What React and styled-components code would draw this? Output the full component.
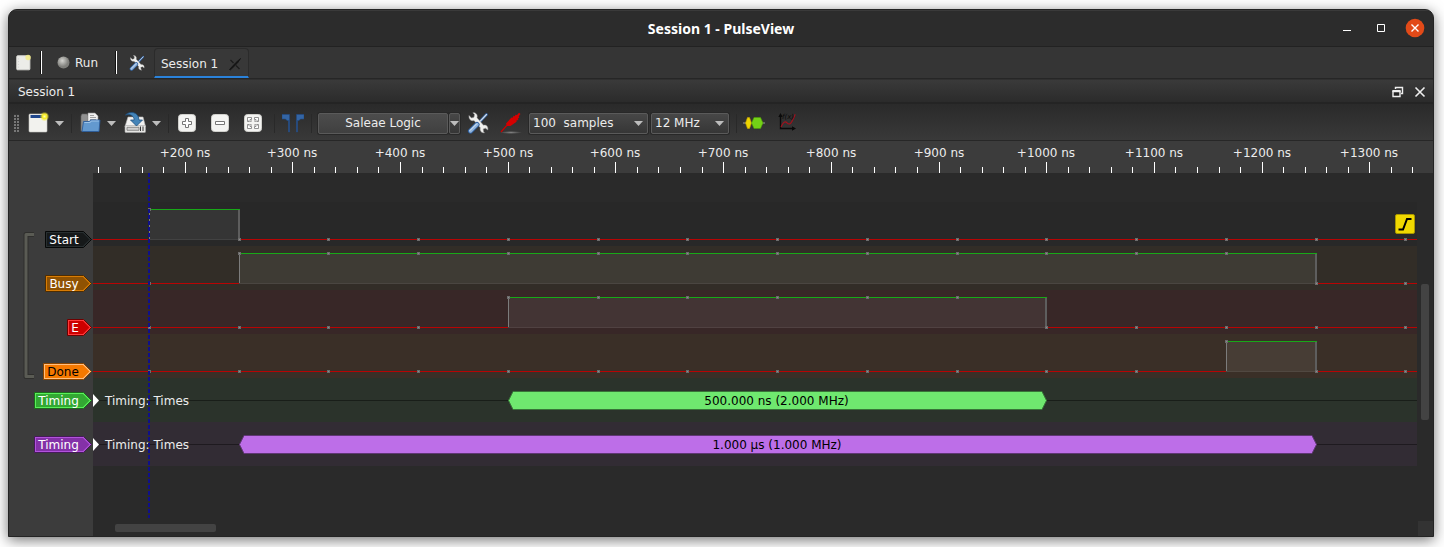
import React from "react";
import styled, { createGlobalStyle } from "styled-components";

const GlobalStyle = createGlobalStyle`
  *, *::before, *::after { box-sizing: border-box; }
  body {
    margin: 0;
    background: #fff;
    color: #ececec;
    font: 12px/16px "DejaVu Sans", Verdana, sans-serif;
  }
  button, select { font: inherit; color: inherit; }
  svg { display: block; }
`;

/* ---------- time scale ---------- */

const GUTTER = 84;
const PX_PER_NS = 1.077;
const position = (ns) => 92 + (ns - 200) * PX_PER_NS;
const tickAt = (ns) => Math.floor(position(ns) + 0.1);
const xAt = (ns) => Math.floor(position(ns) + 0.36);
const SAMPLES = Array.from({ length: 15 }, (_, i) => ((i + 2) * 250) / 3);
const ROW = 44;

/* ---------- window frame ---------- */

const Window = styled.main`
  margin: 9px 10px 10px 8px;
  border: 1px solid #242424;
  border-radius: 9px 9px 0 0;
  overflow: hidden;
  background: #2a2a2a;
  box-shadow: 0 3px 14px rgba(0, 0, 0, 0.55);
`;

const TitleBar = styled.header`
  display: grid;
  grid-template-columns: 1fr auto 1fr;
  align-items: center;
  height: 37px;
  padding: 0 8px 1px;
  background: #2c2c2c;
  border-top: 1px solid #3a3a3a;
  border-bottom: 1px solid #222;
`;

const Title = styled.h1`
  grid-column: 2;
  margin: 0;
  padding-top: 2px;
  font: bold 14px/20px "Noto Sans", "Open Sans", sans-serif;
  color: #fff;
`;

const WindowButtons = styled.div`
  display: flex;
  justify-content: flex-end;
  gap: 14px;
`;

const PlainButton = styled.button`
  display: flex;
  align-items: center;
  justify-content: center;
  flex: none;
  width: ${(p) => p.$w || 22}px;
  height: 22px;
  padding: 0;
  border: 0;
  background: none;
`;

/* ---------- main toolbar and session tab ---------- */

const MainBar = styled.nav`
  display: flex;
  align-items: center;
  height: 32px;
  padding-left: 4px;
  background: #353535;
  border-bottom: 1px solid #262626;
`;

const Divider = styled.span`
  width: 2px;
  height: 23px;
  margin: 0 9px 0 5px;
  border-left: 1px solid #111;
  background: #fff;
`;

const RunButton = styled(PlainButton)`
  width: 59px;
  justify-content: flex-start;
  gap: 5px;
  padding-left: 6px;
`;

const Tab = styled.div`
  display: flex;
  align-items: center;
  justify-content: space-between;
  align-self: flex-end;
  width: 95px;
  height: 30px;
  margin-left: 6px;
  padding: 2px 2px 0 6px;
  border: 1px solid #2b2b2b;
  border-bottom: 2px solid #2a82da;
  border-radius: 4px 4px 0 0;
  background: #383838;
`;

const DockTitle = styled.div`
  display: flex;
  align-items: center;
  height: 25px;
  padding: 2px 2px 0 9px;
  background: linear-gradient(#3a3a3a, #2b2b2b);
  border-top: 1px solid #303030;
  border-bottom: 2px solid #242424;
  h2 { margin: 0 auto 0 0; font: inherit; }
`;

/* ---------- session toolbar ---------- */

const ToolBar = styled.div`
  display: flex;
  align-items: center;
  height: 37px;
  padding: 2px 0 0 5px;
  background: linear-gradient(#2a2a2a, #393939);
  border-bottom: 1px solid #272727;
`;

const Grip = styled.span`
  width: 5px;
  height: 18px;
  margin-right: 8px;
  background:
    repeating-linear-gradient(#343434 0 1px, transparent 1px 3px),
    repeating-linear-gradient(90deg, #777 0 2px, transparent 2px 3px);
`;

const Group = styled.div`
  display: flex;
  align-items: center;
  gap: ${(p) => p.$gap}px;
  padding-right: ${(p) => p.$end || 0}px;
`;

const Separator = styled.span`
  width: 1px;
  height: 19px;
  margin: 0 ${(p) => p.$after || 7}px 0 7px;
  background: #292929;
`;

const face = `
  height: 21px;
  border: 1px solid #5a5a5a;
  border-radius: 2px;
  background: linear-gradient(#474747, #363636);
  box-shadow: 0 0 0 1px #282828;
`;

const DeviceButton = styled.button`
  ${face}
  width: 130px;
  padding: 0;
  background: linear-gradient(#4c4c4c, #404040);
`;

const ArrowButton = styled.button`
  ${face}
  display: flex;
  align-items: center;
  justify-content: center;
  width: 11px;
  padding: 0;
`;

const SelectBox = styled.label`
  display: grid;
  align-items: center;
  width: ${(p) => p.$w}px;
  select, svg { grid-area: 1 / 1; }
  svg { justify-self: end; margin-right: 5px; pointer-events: none; }
`;

const Select = styled.select`
  ${face}
  width: 100%;
  padding: 0 3px;
  appearance: none;
`;

/* ---------- trace view ---------- */

const Ruler = styled.svg`
  width: 100%;
  height: 32px;
  background: #3c3c3c;
`;

const View = styled.section`
  display: flex;
`;

const Gutter = styled.div`
  display: flex;
  flex: none;
  justify-content: space-between;
  width: ${GUTTER}px;
  padding: 29px 1px 0 14px;
  background: #3c3c3c;
`;

const TagSlot = styled.div`
  display: flex;
  align-items: center;
  justify-content: flex-end;
  height: ${ROW}px;
  padding-top: ${(p) => (p.$low ? 31 : 1)}px;
  svg { flex: none; overflow: visible; }
`;

const Plot = styled.div`
  position: relative;
  flex: 1;
  min-width: 0;
  padding-top: 29px;
`;

const Lane = styled.svg`
  width: 100%;
  height: ${ROW}px;
  background: ${(p) => p.$bg};
`;

const Cursor = styled.svg`
  position: absolute;
  top: 0;
  left: ${xAt(500 / 3) - 1}px;
  width: 2px;
  height: 345px;
`;

const Trigger = styled.button`
  position: absolute;
  top: 41px;
  right: 2px;
  width: 20px;
  height: 20px;
  padding: 0;
  border: 1px solid #a89600;
  border-radius: 2px;
  background: #f0d800;
`;

const HScroll = styled.div`
  height: 15px;
  margin-top: 55px;
  padding: 3px 22px;
`;

const VScroll = styled.div`
  display: flex;
  flex-direction: column;
  justify-content: space-between;
  align-items: center;
  flex: none;
  width: 16px;
  padding-top: 111px;
`;

const Thumb = styled.div`
  width: ${(p) => p.$w}px;
  height: ${(p) => p.$h}px;
  border-radius: 2px;
  background: #434343;
`;

const Corner = styled.div`
  width: 15px;
  height: 15px;
  background: #333;
`;

/* ---------- icons ---------- */

const Icon = ({ size = 22, children }) => (
  <svg width={size} height={size} viewBox="0 0 22 22" aria-hidden="true">{children}</svg>
);

const Caret = () => (
  <svg width="9" height="5" viewBox="0 0 9 5" aria-hidden="true">
    <path d="M0 0h9L4.500 5z" fill="#bdbdbd" />
  </svg>
);

const NewIcon = () => (
  <Icon>
    <defs>
      <radialGradient id="glow">
        <stop offset="0" stopColor="#ffffb0" />
        <stop offset=".45" stopColor="#f7ec20" />
        <stop offset="1" stopColor="#f7ec20" stopOpacity="0" />
      </radialGradient>
    </defs>
    <rect x="2" y="2" width="18" height="18" rx="1" fill="#f2f2ee" stroke="#c8c8c4" strokeWidth=".6" />
    <rect x="3.500" y="3" width="13" height="3" fill="#20478c" />
    <circle cx="17.500" cy="4.500" r="4.800" fill="url(#glow)" />
  </Icon>
);

const NewSmallIcon = () => (
  <Icon size={20}>
    <rect x="3" y="3" width="14.500" height="15.500" rx="1" fill="#ecece8" stroke="#d8d8d4" />
    <path d="M5 6v11" stroke="#ccc" strokeDasharray="1 2" />
    <circle cx="15.500" cy="5" r="3" fill="#f5ec80" opacity=".8" />
  </Icon>
);

const OpenIcon = () => (
  <Icon>
    <path d="M2 4l1-2h5l1 2v15H2z" fill="#8f8f8f" stroke="#666" strokeWidth=".6" />
    <path d="M9 1h7l3 3v8H9z" fill="#f0f0f0" stroke="#999" strokeWidth=".6" />
    <path d="M11 3.500h4M11 5.500h6M11 7.500h6" stroke="#999" strokeWidth=".9" />
    <path d="M4.500 9.500h6l1-1.500h9.500L20 19.500H3z" fill="#6399cf" stroke="#2c5d9c" strokeWidth=".9" />
    <path d="M5.400 10.500h5.800l1-1.500h7.700" fill="none" stroke="#a3c7ea" strokeWidth=".9" />
  </Icon>
);

const SaveIcon = () => (
  <Icon>
    <path d="M4 5h15l2.500 9.500H1z" fill="#f1f1f0" stroke="#bbb" strokeWidth=".6" />
    <rect x="1" y="13.500" width="20.500" height="7" rx=".8" fill="#e6e6e4" stroke="#aaa" strokeWidth=".6" />
    <path d="M3 15.300h12v3H3z" fill="#cfcfcf" stroke="#777" strokeWidth=".8" />
    <path d="M16.500 14.500v4.500M19 14.500v4.500" stroke="#222" strokeWidth=".9" />
    <path d="M1.500 3C5-1 14.500-1 15 8H18.500L12.500 14 6.500 8h3.700C10 4.500 7 1.500 1.500 3z" fill="#4484b8" stroke="#1e5180" strokeWidth=".8" />
  </Icon>
);

const ZoomBase = ({ children }) => (
  <Icon>
    <rect x="2.500" y="2.500" width="17" height="17" rx="3" fill="#f4f4f2" stroke="#d0d0cc" />
    {children}
  </Icon>
);

const ZoomInIcon = () => (
  <ZoomBase>
    <path d="M9.500 6.500h3v3h3v3h-3v3h-3v-3h-3v-3h3z" fill="#fff" stroke="#777" />
  </ZoomBase>
);

const ZoomOutIcon = () => (
  <ZoomBase>
    <path d="M6.500 9.500h9v3h-9z" fill="#fff" stroke="#777" />
  </ZoomBase>
);

const ZoomFitIcon = () => (
  <ZoomBase>
    <path
      d="M5.500 9.500v-4h4v2h-1.500l1.500 1.500-1 1-1.500-1.500v1zM16.500 9.500v-4h-4v2h1.500l-1.500 1.500 1 1 1.500-1.500v1zM5.500 12.500v4h4v-2h-1.500l1.500-1.500-1-1-1.500 1.500v-1zM16.500 12.500v4h-4v-2h1.500l-1.500-1.500 1-1 1.500 1.500v-1z"
      fill="#fff" stroke="#777" strokeWidth=".8"
    />
  </ZoomBase>
);

const FlagsIcon = () => (
  <Icon>
    <path d="M0 2.500h7.500V20h-1V8.500H5L3.500 7H0zM22 2.500h-7.500V20h1V8.500H17L18.500 7H22z" fill="#3465a4" stroke="#204a87" strokeWidth=".6" />
  </Icon>
);

const ToolsIcon = ({ size }) => (
  <Icon size={size}>
    <path d="M19.500 2.500l-9 9.500" stroke="#3465a4" strokeWidth="2.600" strokeLinecap="round" />
    <path d="M19.500 2.500l-9 9.500" stroke="#d5deea" strokeWidth="1.100" strokeLinecap="round" />
    <path d="M2 3.500L4.500 6 7 5.200 7.500 2.500 5.800.8C9 .2 11 3 10 5.800l6.500 7.400c3-.8 5 1.800 4.300 4.800l-2.300-1.800-2.300.8.300 2.600 1 1.200c-3.200.2-5-2-4.200-5L7 8.600C4 9.500 1.500 7 2 3.500z" fill="#f0f0ee" stroke="#999" strokeWidth=".5" />
    <path d="M10 12.500L3.500 19" stroke="#2c5d9c" strokeWidth="5.200" strokeLinecap="round" />
    <path d="M10 12.500L3.500 19" stroke="#8fb3dc" strokeWidth="3.400" strokeLinecap="round" />
    <path d="M9.500 12L3 18.500" stroke="#dce8f5" strokeWidth="1" strokeLinecap="round" />
  </Icon>
);

const ProbeIcon = () => (
  <Icon>
    <defs>
      <radialGradient id="probeShadow">
        <stop offset="0" stopColor="#808080" />
        <stop offset="1" stopColor="#808080" stopOpacity="0" />
      </radialGradient>
    </defs>
    <ellipse cx="11" cy="20.500" rx="11" ry="1.500" fill="url(#probeShadow)" />
    <path d="M1 20L8 12" stroke="#c00" strokeWidth="1.200" />
    <path d="M7 14L6 11.500 11.500 5.500l1.200.3.8-2 1.400.4.6-1.400 1.500.2L19 .8l1.500 1.200-1.800 2.300.6 1.300-1.300.8.2 1.500-1.800.6.2 1.300L10.500 14z" fill="#d40000" />
  </Icon>
);

const DecoderIcon = () => (
  <Icon>
    <path d="M0 11h22" stroke="#999" />
    <path d="M4.500 5.500h2l2 5.500-2 5.500h-2L2.500 11z" fill="#edd400" stroke="#c4a000" strokeWidth=".6" />
    <path d="M11 5.500h6.500l2.500 5.500-2.500 5.500H11L8.500 11z" fill="#73d216" stroke="#4e9a06" strokeWidth=".6" />
  </Icon>
);

const MathIcon = () => (
  <Icon>
    <path d="M3.500 4v12.500H17" fill="none" stroke="#0a0a0a" strokeWidth="1.400" />
    <path d="M1.300 5L3.500 1 5.700 5zM15 14.200l4 2.300-4 2.300z" fill="#0a0a0a" />
    <path d="M4 15c2-4.500 4-6.500 6-4.200s4 1 5-1.500 3-4.500 3-7" fill="none" stroke="#a4101c" strokeWidth="1.200" />
    <text x="5" y="7" fontSize="7" fontStyle="italic" fill="#0a0a0a">f(x)</text>
  </Icon>
);

/* ---------- channel tags ---------- */

function Tag({ label, w, fill, edge, rim, ink = "#fff" }) {
  return (
    <svg width={w} height="17" role="img" aria-label={label}>
      <path d={`M.5 .5H${w - 8.5}L${w - 0.5} 8.500L${w - 8.5} 16.500H.5z`} fill={edge} stroke={rim} />
      <path d={`M2 2H${w - 9}L${w - 2.5} 8.500L${w - 9} 15H2z`} fill={fill} />
      <text x={(w - 9) / 2} y="13" textAnchor="middle" fill={ink}>{label}</text>
    </svg>
  );
}

/* ---------- lanes ---------- */

function LogicLane({ bg, area, high }) {
  const [a, b] = high;
  const xa = xAt(a);
  const xb = xAt(b);
  return (
    <Lane $bg={bg} shapeRendering="crispEdges">
      <rect x="0" y="37" width={xa} height="1" fill="#b80404" />
      <rect x={xb} y="37" width="100%" height="1" fill="#b80404" />
      <rect x={xa} y="8" width={xb - xa} height="29" fill={area} />
      <rect x={xa} y="37" width={xb - xa} height="1" fill="#fff" fillOpacity=".12" />
      <rect x={xa} y="7" width="1" height="30" fill="#7c7c7c" />
      <rect x={xb - 1} y="7" width="2" height="30" fill="#5e5e5e" />
      <rect x={xa} y="7" width={xb - xa + 1} height="1" fill="#18a818" />
      {SAMPLES.map((t) => {
        const up = t > a - 1 && t < b - 1;
        return (
          <g key={t}>
            <rect x={xAt(t) - 1} y={up ? 6 : 36} width="3" height="3" fill="#6c6c6c" />
            <rect x={xAt(t)} y={up ? 7 : 37} width="1" height="1" fill="#8e8e8e" />
          </g>
        );
      })}
    </Lane>
  );
}

function DecodeLane({ bg, range, text, fill, edge }) {
  const xa = xAt(range[0]);
  const xb = xAt(range[1]);
  return (
    <Lane $bg={bg}>
      <rect x="0" y="22" width={xa} height="1" fill="#000" fillOpacity=".4" />
      <rect x={xb} y="22" width="100%" height="1" fill="#000" fillOpacity=".4" />
      <path d="M0 16v13L6 22.500z" fill="#fff" />
      <text x="12" y="27" fill="#ececec" stroke={bg} strokeWidth="2" paintOrder="stroke">Timing: Times</text>
      <path
        d={`M${xa + 0.5} 22.500L${xa + 5} 13.500H${xb - 4}L${xb + 0.5} 22.500L${xb - 4} 31.500H${xa + 5}z`}
        fill={fill} stroke={edge}
      />
      <text x={(xa + xb - 1) / 2} y="27" textAnchor="middle" fill="#000">{text}</text>
    </Lane>
  );
}

const CHANNELS = [
  { label: "Start", w: 47, fill: "#16191a", edge: "#272e30", rim: "#060808", bg: "#282828", area: "#353535", high: [500 / 3, 250] },
  { label: "Busy", w: 47, fill: "#8f5202", edge: "#d97c04", rim: "#4e2d02", bg: "#322d27", area: "#3e3b34", high: [250, 1250] },
  { label: "E", w: 25, fill: "#cc0000", edge: "#ff3b3b", rim: "#6e0000", bg: "#382727", area: "#433434", high: [500, 1000] },
  { label: "Done", w: 49, fill: "#f57900", edge: "#ffbe80", rim: "#8a4500", ink: "#000", bg: "#3a2f27", area: "#473d35", high: [3500 / 3, 1250] },
];

const DECODERS = [
  { id: "e", label: "Timing", w: 58, fill: "#33a833", edge: "#58f058", rim: "#1c6a1c", bg: "#2b332b", range: [500, 1000], text: "500.000 ns (2.000 MHz)", bar: "#6fe86f", barEdge: "#387438" },
  { id: "busy", label: "Timing", w: 58, fill: "#8431a8", edge: "#b252dc", rim: "#461a5a", bg: "#322c34", range: [250, 1250], text: "1.000 µs (1.000 MHz)", bar: "#bd6ee8", barEdge: "#5f3774" },
];

const TICKS = Array.from({ length: 62 }, (_, i) => 120 + i * 20);

export default function App() {
  return (
    <>
      <GlobalStyle />
      <Window>
        <TitleBar>
          <Title>Session 1 - PulseView</Title>
          <WindowButtons>
            <PlainButton $w={20} aria-label="Minimize">
              <svg width="20" height="20"><path d="M6 12.500h8" stroke="#fff" /></svg>
            </PlainButton>
            <PlainButton $w={20} aria-label="Maximize">
              <svg width="20" height="20"><path d="M6.500 6.500h7v7h-7z" fill="none" stroke="#fff" /></svg>
            </PlainButton>
            <PlainButton $w={20} aria-label="Close">
              <svg width="20" height="20">
                <circle cx="10" cy="10" r="9.300" fill="#e24a18" />
                <path d="M6.500 6.500l7 7M13.500 6.500l-7 7" stroke="#fff" strokeWidth="1.400" />
              </svg>
            </PlainButton>
          </WindowButtons>
        </TitleBar>

        <MainBar>
          <PlainButton aria-label="New session"><NewSmallIcon /></PlainButton>
          <Divider />
          <RunButton>
            <svg width="13" height="13" aria-hidden="true">
              <defs>
                <radialGradient id="ball" cx=".4" cy=".35">
                  <stop offset="0" stopColor="#d4d4d0" />
                  <stop offset="1" stopColor="#80807c" />
                </radialGradient>
              </defs>
              <circle cx="6.500" cy="6.500" r="6" fill="url(#ball)" />
            </svg>
            Run
          </RunButton>
          <Divider />
          <PlainButton aria-label="Settings"><ToolsIcon size={16} /></PlainButton>
          <Tab>
            Session 1
            <PlainButton aria-label="Close tab">
              <svg width="14" height="14">
                <path d="M2.500 3l3 3M8 8.500l3.500 3.500" stroke="#1c1c1c" strokeWidth="1.400" />
                <path d="M12.500 1.500L8 5.500 1.500 12.500l1 .3 7-6.800z" fill="#141414" stroke="#141414" strokeWidth=".9" />
              </svg>
            </PlainButton>
          </Tab>
        </MainBar>

        <DockTitle>
          <h2>Session 1</h2>
          <PlainButton aria-label="Float">
            <svg width="12" height="12">
              <path d="M3.500 3V1.500h7v6H9" fill="none" stroke="#eee" strokeWidth="1.400" />
              <path d="M1 5.500h7v5H1z" fill="#222" stroke="#eee" strokeWidth="1.400" />
              <path d="M.4 5h8.200" stroke="#eee" strokeWidth="2" />
            </svg>
          </PlainButton>
          <PlainButton aria-label="Close session">
            <svg width="12" height="12">
              <path d="M1.500 1.500l9 9M10.500 1.500l-9 9" stroke="#eee" strokeWidth="1.600" />
            </svg>
          </PlainButton>
        </DockTitle>

        <ToolBar>
          <Grip />
          <Group $gap={5}>
            <PlainButton aria-label="New view"><NewIcon /></PlainButton>
            <PlainButton $w={10} aria-label="New view menu"><Caret /></PlainButton>
          </Group>
          <Separator />
          <Group $gap={5} $end={8}>
            <PlainButton aria-label="Open"><OpenIcon /></PlainButton>
            <PlainButton $w={10} aria-label="Open menu"><Caret /></PlainButton>
          </Group>
          <Group $gap={5}>
            <PlainButton aria-label="Save"><SaveIcon /></PlainButton>
            <PlainButton $w={10} aria-label="Save menu"><Caret /></PlainButton>
          </Group>
          <Separator />
          <Group $gap={11} $end={3}>
            <PlainButton aria-label="Zoom in"><ZoomInIcon /></PlainButton>
            <PlainButton aria-label="Zoom out"><ZoomOutIcon /></PlainButton>
            <PlainButton aria-label="Zoom to fit"><ZoomFitIcon /></PlainButton>
          </Group>
          <Separator />
          <PlainButton aria-label="Show cursors"><FlagsIcon /></PlainButton>
          <Separator $after={6} />
          <Group $gap={1} $end={7}>
            <DeviceButton>Saleae Logic</DeviceButton>
            <ArrowButton aria-label="Choose device"><Caret /></ArrowButton>
          </Group>
          <Group $gap={11} $end={7}>
            <PlainButton aria-label="Configure device"><ToolsIcon /></PlainButton>
            <PlainButton aria-label="Configure channels"><ProbeIcon /></PlainButton>
          </Group>
          <Group $gap={3}>
            <SelectBox $w={119}>
              <Select aria-label="Sample count"><option>{"100\u00a0\u00a0samples"}</option></Select>
              <Caret />
            </SelectBox>
            <SelectBox $w={78}>
              <Select aria-label="Sample rate"><option>12 MHz</option></Select>
              <Caret />
            </SelectBox>
          </Group>
          <Separator $after={6} />
          <Group $gap={12}>
            <PlainButton aria-label="Add decoder"><DecoderIcon /></PlainButton>
            <PlainButton aria-label="Add math signal"><MathIcon /></PlainButton>
          </Group>
        </ToolBar>

        <Ruler>
          <svg x={GUTTER} overflow="visible">
            {TICKS.map((t) => {
              const major = t % 100 === 0;
              return (
                <g key={t}>
                  <rect x={tickAt(t)} y={major ? 21 : 26} width="1" height={major ? 11 : 6} fill="#fff" shapeRendering="crispEdges" />
                  {major && <text x={tickAt(t)} y="16" textAnchor="middle" fill="#ececec">{`+${t} ns`}</text>}
                </g>
              );
            })}
          </svg>
        </Ruler>

        <View>
          <Gutter>
            <svg width="12" height="180" aria-hidden="true">
              <path d="M10 32.500H3V174.500H10" fill="none" stroke="#2f2f2d" strokeWidth="5" strokeLinejoin="round" strokeLinecap="round" />
              <path d="M11 32.500H3V174.500H11" fill="none" stroke="#5a5b54" strokeWidth="3" strokeLinejoin="round" />
            </svg>
            <div>
              {CHANNELS.map((c) => (
                <TagSlot key={c.label} $low><Tag {...c} /></TagSlot>
              ))}
              {DECODERS.map((d) => (
                <TagSlot key={d.id}><Tag {...d} /></TagSlot>
              ))}
            </div>
          </Gutter>
          <Plot>
            {CHANNELS.map((c) => <LogicLane key={c.label} bg={c.bg} area={c.area} high={c.high} />)}
            {DECODERS.map((d) => (
              <DecodeLane key={d.id} bg={d.bg} range={d.range} text={d.text} fill={d.bar} edge={d.barEdge} />
            ))}
            <Cursor aria-hidden="true">
              <path d="M1 0V345" stroke="#10108a" strokeWidth="2" strokeDasharray="4 2" />
            </Cursor>
            <Trigger aria-label="Trigger on rising edge">
              <svg width="18" height="18">
                <path d="M2.500 14.500H7L11 4h4.500" fill="none" stroke="#000" strokeWidth="2" />
              </svg>
            </Trigger>
            <HScroll><Thumb $w={101} $h={8} /></HScroll>
          </Plot>
          <VScroll>
            <Thumb $w={8} $h={136} />
            <Corner />
          </VScroll>
        </View>
      </Window>
    </>
  );
}
